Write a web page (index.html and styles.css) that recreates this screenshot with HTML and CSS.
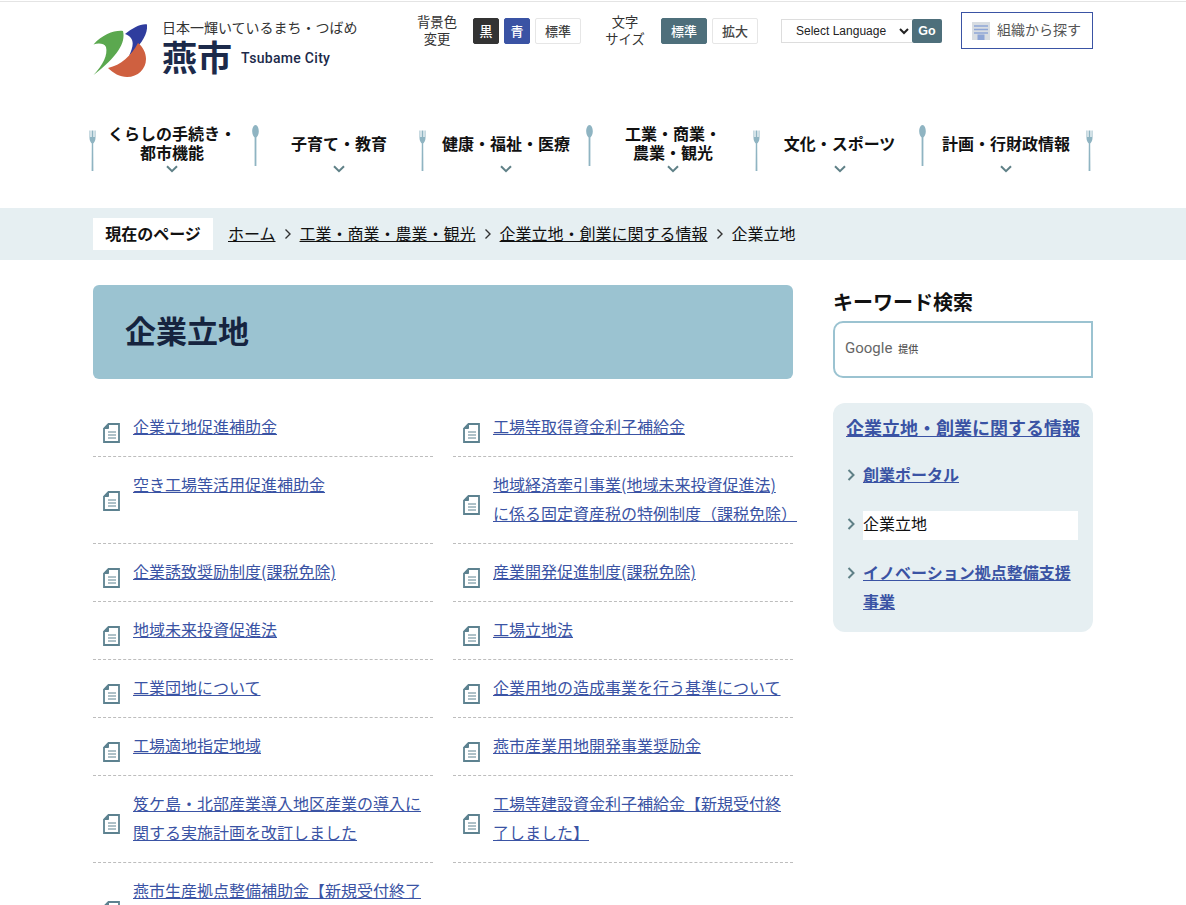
FILE: index.html
```html
<!DOCTYPE html>
<html lang="ja">
  <head>
    <meta charset="UTF-8" />
    <meta name="viewport" content="width=device-width, initial-scale=1.0" />
    <title>企業立地 | 燕市</title>
    <link rel="stylesheet" href="styles.css">
  </head>
  <body>
    <svg class="svg-defs" width="0" height="0" aria-hidden="true">
      <symbol id="fork" viewBox="0 0 7 41">
        <path d="M0.5 0.5V8C0.5 11 2 12.5 2.8 13.5L2.6 41H4.4L4.2 13.5C5 12.5 6.5 11 6.5 8V0.5H5.6V7H4.4V0.5H2.6V7H1.4V0.5Z" fill="#8fb4c2"/>
      </symbol>
      <symbol id="spoon" viewBox="0 0 7 41">
        <path d="M3.5 0C5.5 0 6.8 3 6.8 6.5C6.8 9.5 5.5 11.5 4.4 12.5L4.4 41H2.6L2.6 12.5C1.5 11.5 0.2 9.5 0.2 6.5C0.2 3 1.5 0 3.5 0Z" fill="#8fb4c2"/>
      </symbol>
      <symbol id="chev-down" viewBox="0 0 12 8">
        <path d="M1 1.2L6 6.2L11 1.2" fill="none" stroke="#5f8087" stroke-width="2"/>
      </symbol>
      <symbol id="chev-right" viewBox="0 0 8 12">
        <path d="M1.5 1L6.5 6L1.5 11" fill="none" stroke="#5f8087" stroke-width="2"/>
      </symbol>
      <symbol id="crumb-chev" viewBox="0 0 8 12">
        <path d="M1.5 1.5L6 6L1.5 10.5" fill="none" stroke="#333" stroke-width="1.4"/>
      </symbol>
      <symbol id="doc" viewBox="0 0 17 20">
        <path d="M5.5 1H16V19H1V5.5Z" fill="#fff" stroke="#5d8290" stroke-width="1.8"/>
        <path d="M1 5.5L5.5 1V5.5Z" fill="#5d8290" stroke="#5d8290" stroke-width="1"/>
        <path d="M5 9H13M5 12H13M5 15H13" stroke="#5d8290" stroke-width="1"/>
      </symbol>
    </svg>

    <header class="site-header">
      <div class="wrap header-inner">
        <a class="logo" href="#">
          <svg class="logo-mark" width="54" height="55" viewBox="0 0 54 55">
            <path d="M0.5 52C10 42 15 32 13 24C11 20 5 20 0.5 21.5C10 11 22 7 30 8C33 20 24 34 0.5 52Z" fill="#5ba84f"/>
            <path d="M32 11C40 5 48 0.5 54 1.5C55 12 48 21 36 33C41 22 42 15 32 11Z" fill="#2f3d9e"/>
            <path d="M45 20C50 24 53 30 53 36C53 46 45 54 34 54C27 54 20 50 15 45C28 42 38 33 45 20Z" fill="#cf6040"/>
          </svg>
          <div class="logo-text">
            <div class="logo-tag">日本一輝いているまち・つばめ</div>
            <div class="logo-name">
              <span class="logo-city">燕市</span>
              <span class="logo-en">Tsubame City</span>
            </div>
          </div>
        </a>

        <div class="tools">
          <div class="tool-group">
            <span class="tool-label">背景色<br>変更</span>
            <button class="tool-btn tool-black">黒</button>
            <button class="tool-btn tool-blue">青</button>
            <button class="tool-btn tool-wide">標準</button>
          </div>
          <div class="tool-group">
            <span class="tool-label">文字<br>サイズ</span>
            <button class="tool-btn tool-wide tool-on">標準</button>
            <button class="tool-btn tool-wide">拡大</button>
          </div>
          <form class="lang">
            <select class="lang-select">
              <option>Select Language</option>
            </select>
            <button class="lang-go" type="button">Go</button>
          </form>
          <a class="org-link" href="#">
            <svg width="18" height="18" viewBox="0 0 18 18">
              <rect width="18" height="18" fill="#d8dde2"/>
              <path d="M2 4H16M2 7.5H16M2 11H16" stroke="#8ea6d6" stroke-width="1.6"/>
              <rect x="5.5" y="12.5" width="7" height="5.5" fill="#8ea6d6"/>
            </svg>
            <span class="org-text">組織から探す</span>
          </a>
        </div>
      </div>

      <nav class="gnav">
        <svg class="gnav-sep"><use href="#fork"/></svg>
        <a class="gnav-item gnav-first" href="#"><span class="gnav-label">くらしの手続き・<br>都市機能</span><svg class="gnav-chev"><use href="#chev-down"/></svg></a>
        <svg class="gnav-sep gnav-sep-spoon"><use href="#spoon"/></svg>
        <a class="gnav-item" href="#"><span class="gnav-label">子育て・教育</span><svg class="gnav-chev"><use href="#chev-down"/></svg></a>
        <svg class="gnav-sep"><use href="#fork"/></svg>
        <a class="gnav-item" href="#"><span class="gnav-label">健康・福祉・医療</span><svg class="gnav-chev"><use href="#chev-down"/></svg></a>
        <svg class="gnav-sep gnav-sep-spoon"><use href="#spoon"/></svg>
        <a class="gnav-item" href="#"><span class="gnav-label">工業・商業・<br>農業・観光</span><svg class="gnav-chev"><use href="#chev-down"/></svg></a>
        <svg class="gnav-sep"><use href="#fork"/></svg>
        <a class="gnav-item gnav-narrow" href="#"><span class="gnav-label">文化・スポーツ</span><svg class="gnav-chev"><use href="#chev-down"/></svg></a>
        <svg class="gnav-sep gnav-sep-spoon"><use href="#spoon"/></svg>
        <a class="gnav-item" href="#"><span class="gnav-label">計画・行財政情報</span><svg class="gnav-chev"><use href="#chev-down"/></svg></a>
        <svg class="gnav-sep"><use href="#fork"/></svg>
      </nav>
    </header>

    <div class="crumbs">
      <div class="wrap crumbs-inner">
        <span class="crumbs-label">現在のページ</span>
        <a href="#">ホーム</a>
        <svg class="crumbs-chev"><use href="#crumb-chev"/></svg>
        <a href="#">工業・商業・農業・観光</a>
        <svg class="crumbs-chev"><use href="#crumb-chev"/></svg>
        <a href="#">企業立地・創業に関する情報</a>
        <svg class="crumbs-chev"><use href="#crumb-chev"/></svg>
        <span>企業立地</span>
      </div>
    </div>

    <div class="wrap content">
      <main class="main">
        <h1 class="page-title">企業立地</h1>
        <ul class="link-list">
          <li class="link-row"><svg class="doc"><use href="#doc"/></svg><a href="#">企業立地促進補助金</a></li>
          <li class="link-row"><svg class="doc"><use href="#doc"/></svg><a href="#">工場等取得資金利子補給金</a></li>
          <li class="link-row link-row-top"><svg class="doc"><use href="#doc"/></svg><a href="#">空き工場等活用促進補助金</a></li>
          <li class="link-row"><svg class="doc"><use href="#doc"/></svg><a href="#">地域経済牽引事業(地域未来投資促進法)<br>に係る固定資産税の特例制度（課税免除）</a></li>
          <li class="link-row"><svg class="doc"><use href="#doc"/></svg><a href="#">企業誘致奨励制度(課税免除)</a></li>
          <li class="link-row"><svg class="doc"><use href="#doc"/></svg><a href="#">産業開発促進制度(課税免除)</a></li>
          <li class="link-row"><svg class="doc"><use href="#doc"/></svg><a href="#">地域未来投資促進法</a></li>
          <li class="link-row"><svg class="doc"><use href="#doc"/></svg><a href="#">工場立地法</a></li>
          <li class="link-row"><svg class="doc"><use href="#doc"/></svg><a href="#">工業団地について</a></li>
          <li class="link-row"><svg class="doc"><use href="#doc"/></svg><a href="#">企業用地の造成事業を行う基準について</a></li>
          <li class="link-row"><svg class="doc"><use href="#doc"/></svg><a href="#">工場適地指定地域</a></li>
          <li class="link-row"><svg class="doc"><use href="#doc"/></svg><a href="#">燕市産業用地開発事業奨励金</a></li>
          <li class="link-row"><svg class="doc"><use href="#doc"/></svg><a href="#">笈ケ島・北部産業導入地区産業の導入に関する実施計画を改訂しました</a></li>
          <li class="link-row"><svg class="doc"><use href="#doc"/></svg><a href="#">工場等建設資金利子補給金【新規受付終了しました】</a></li>
          <li class="link-row"><svg class="doc"><use href="#doc"/></svg><a href="#">燕市生産拠点整備補助金【新規受付終了しました】</a></li>
        </ul>
      </main>

      <aside class="side">
        <h2 class="side-title">キーワード検索</h2>
        <div class="search-box">
          <span class="search-google">Google</span>
          <span class="search-by">提供</span>
        </div>
        <div class="side-menu">
          <h2 class="side-menu-title"><a href="#">企業立地・創業に関する情報</a></h2>
          <ul class="side-list">
            <li class="side-item"><svg class="side-chev"><use href="#chev-right"/></svg><div class="side-text"><a href="#">創業ポータル</a></div></li>
            <li class="side-item"><svg class="side-chev"><use href="#chev-right"/></svg><div class="side-text side-current">企業立地</div></li>
            <li class="side-item"><svg class="side-chev"><use href="#chev-right"/></svg><div class="side-text"><a href="#">イノベーション拠点整備支援事業</a></div></li>
          </ul>
        </div>
      </aside>
    </div>
  </body>
</html>
```

FILE: styles.css
```css
* {
  box-sizing: border-box;
}

html,
body {
  height: 905px;
  overflow: hidden;
}

body {
  margin: 0;
  padding-top: 1px;
  background-color: #ffffff;
  color: #111111;
  font-family: "Noto Sans CJK JP", "Noto Sans", sans-serif;
  font-size: 16px;
}

a {
  color: #3a53a4;
}

ul {
  list-style: none;
  margin: 0;
  padding: 0;
}

.svg-defs {
  position: absolute;
}

.wrap {
  width: 1000px;
  margin: 0 auto;
}

/* header */
.site-header {
  border-top: 1px solid #e4e4e4;
}

.header-inner {
  height: 123px;
  padding-top: 10px;
  display: flex;
  justify-content: space-between;
  align-items: flex-start;
}

.logo {
  display: flex;
  margin-top: 7px;
  color: #1c2a4a;
  text-decoration: none;
}

.logo-mark {
  flex: none;
  margin-top: 4px;
}

.logo-text {
  margin-left: 15px;
}

.logo-tag {
  font-size: 14px;
  line-height: 16px;
  color: #333;
}

.logo-name {
  display: flex;
  align-items: center;
  margin-top: 2px;
}

.logo-city {
  font-size: 35px;
  line-height: 38px;
  font-weight: 700;
}

.logo-en {
  margin: 4px 0 0 9px;
  font-family: "Roboto", sans-serif;
  font-size: 14px;
  font-weight: 500;
  letter-spacing: 0.3px;
}

.tools {
  display: flex;
  align-items: center;
  height: 37px;
}

.tool-group {
  display: flex;
  align-items: center;
  gap: 5px;
  margin-right: 24px;
}

.tool-label {
  width: 40px;
  margin-right: 11px;
  padding-bottom: 1px;
  font-size: 13.3px;
  line-height: 17px;
  text-align: center;
  color: #333;
  white-space: nowrap;
}

.tool-btn {
  width: 26px;
  height: 26px;
  padding: 0;
  border: 1px solid #e6e6e6;
  border-radius: 2px;
  background-color: #ffffff;
  color: #444;
  font-family: inherit;
  font-size: 13px;
  font-weight: 500;
}

.tool-wide {
  width: 46px;
}

.tool-black {
  background-color: #333333;
  border-color: #333333;
  color: #ffffff;
}

.tool-blue {
  background-color: #3a53a4;
  border-color: #3a53a4;
  color: #ffffff;
}

.tool-on {
  background-color: #4e6f7b;
  border-color: #4e6f7b;
  color: #ffffff;
}

.lang {
  display: flex;
  margin-right: 19px;
  margin-left: -1px;
}

.lang-select {
  width: 131px;
  height: 24px;
  padding-left: 10px;
  border: 1px solid #dddddd;
  border-right: none;
  border-radius: 0;
  background-color: #ffffff;
  color: #222;
  font-family: "Liberation Sans", sans-serif;
  font-size: 12px;
}

.lang-go {
  width: 30px;
  height: 24px;
  padding: 0;
  border: none;
  border-radius: 2px;
  background-color: #4e6f7b;
  color: #ffffff;
  font-family: "Liberation Sans", sans-serif;
  font-size: 12.5px;
  font-weight: 700;
}

.org-link {
  display: flex;
  align-items: center;
  gap: 7px;
  width: 132px;
  height: 37px;
  padding-left: 10px;
  border: 1px solid #3a53a4;
  color: #555;
  font-size: 14px;
  text-decoration: none;
  white-space: nowrap;
}

.org-text {
  padding-bottom: 3px;
}

/* global nav */
.gnav {
  display: flex;
  width: 1004px;
  height: 83px;
  margin-left: 89px;
}

.gnav-sep {
  flex: none;
  width: 7px;
  height: 41px;
  margin-top: 5px;
}

.gnav-sep-spoon {
  margin-top: 0;
}

.gnav-item {
  flex: none;
  width: 160px;
  height: 50px;
  display: flex;
  flex-direction: column;
  align-items: center;
  color: #111111;
  font-weight: 700;
  line-height: 19px;
  text-align: center;
  text-decoration: none;
}

.gnav-first {
  width: 156px;
  padding-right: 4px;
}

.gnav-narrow {
  width: 159px;
}

.gnav-label {
  height: 38px;
  margin-top: -1px;
  display: flex;
  align-items: center;
}

.gnav-chev {
  width: 12px;
  height: 8px;
  margin-top: 3px;
}

/* breadcrumb */
.crumbs {
  height: 52px;
  background-color: #e6eff2;
}

.crumbs-inner {
  height: 100%;
  display: flex;
  align-items: center;
  padding-bottom: 2px;
  font-size: 16px;
}

.crumbs-inner a {
  color: #111111;
}

.crumbs-label {
  width: 120px;
  height: 32px;
  margin: 2px 15px 0 0;
  background-color: #ffffff;
  font-size: 16px;
  font-weight: 700;
  line-height: 30px;
  text-align: center;
}

.crumbs-chev {
  width: 8px;
  height: 12px;
  margin: 2px 8px 0;
}

/* content */
.content {
  display: flex;
  justify-content: space-between;
  padding-top: 25px;
}

.main {
  width: 700px;
}

.page-title {
  height: 94px;
  margin: 0 0 20px;
  padding-left: 32px;
  border-radius: 6px;
  background-color: #9bc3d1;
  color: #16243f;
  font-size: 31px;
  font-weight: 700;
  line-height: 90px;
}

.link-list {
  display: grid;
  grid-template-columns: 340px 340px;
  column-gap: 20px;
}

.link-row {
  display: flex;
  align-items: center;
  padding: 13px 0 15px;
  border-bottom: 1px dashed #bdbdbd;
  line-height: 29px;
}

.link-row-top {
  align-items: flex-start;
}

.link-row-top .doc {
  margin-top: 21px;
  margin-bottom: 0;
}

.doc {
  flex: none;
  width: 17px;
  height: 20px;
  margin: 6px 13px -6px 10px;
}

/* sidebar */
.side {
  width: 260px;
}

.side-title {
  margin: 0;
  padding-bottom: 2px;
  font-size: 20px;
  line-height: 34px;
  font-weight: 700;
}

.search-box {
  display: flex;
  align-items: center;
  height: 57px;
  padding: 0 10px 3px;
  border: 2px solid #9bc3d1;
  border-radius: 10px 0 0 10px;
}

.search-google {
  font-family: "Roboto", sans-serif;
  font-size: 15px;
  color: #666666;
}

.search-by {
  margin-left: 6px;
  font-size: 10px;
  font-weight: 500;
  color: #555555;
}

.side-menu {
  margin-top: 25px;
  padding: 10px 15px 16px 13px;
  border-radius: 12px;
  background-color: #e6eff2;
}

.side-menu-title {
  margin: 0 0 18px;
  font-size: 18px;
  font-weight: 700;
  line-height: 29px;
  white-space: nowrap;
}

.side-list {
  display: flex;
  flex-direction: column;
  gap: 20px;
}

.side-item {
  display: flex;
  line-height: 29px;
  font-weight: 700;
}

.side-chev {
  flex: none;
  width: 8px;
  height: 12px;
  margin: 9px 8px 0 1px;
}

.side-text {
  flex: 1;
}

.side-current {
  height: 29px;
  margin: 2px 0 -2px;
  background-color: #ffffff;
  font-weight: 400;
  line-height: 25px;
  color: #111;
}
```
